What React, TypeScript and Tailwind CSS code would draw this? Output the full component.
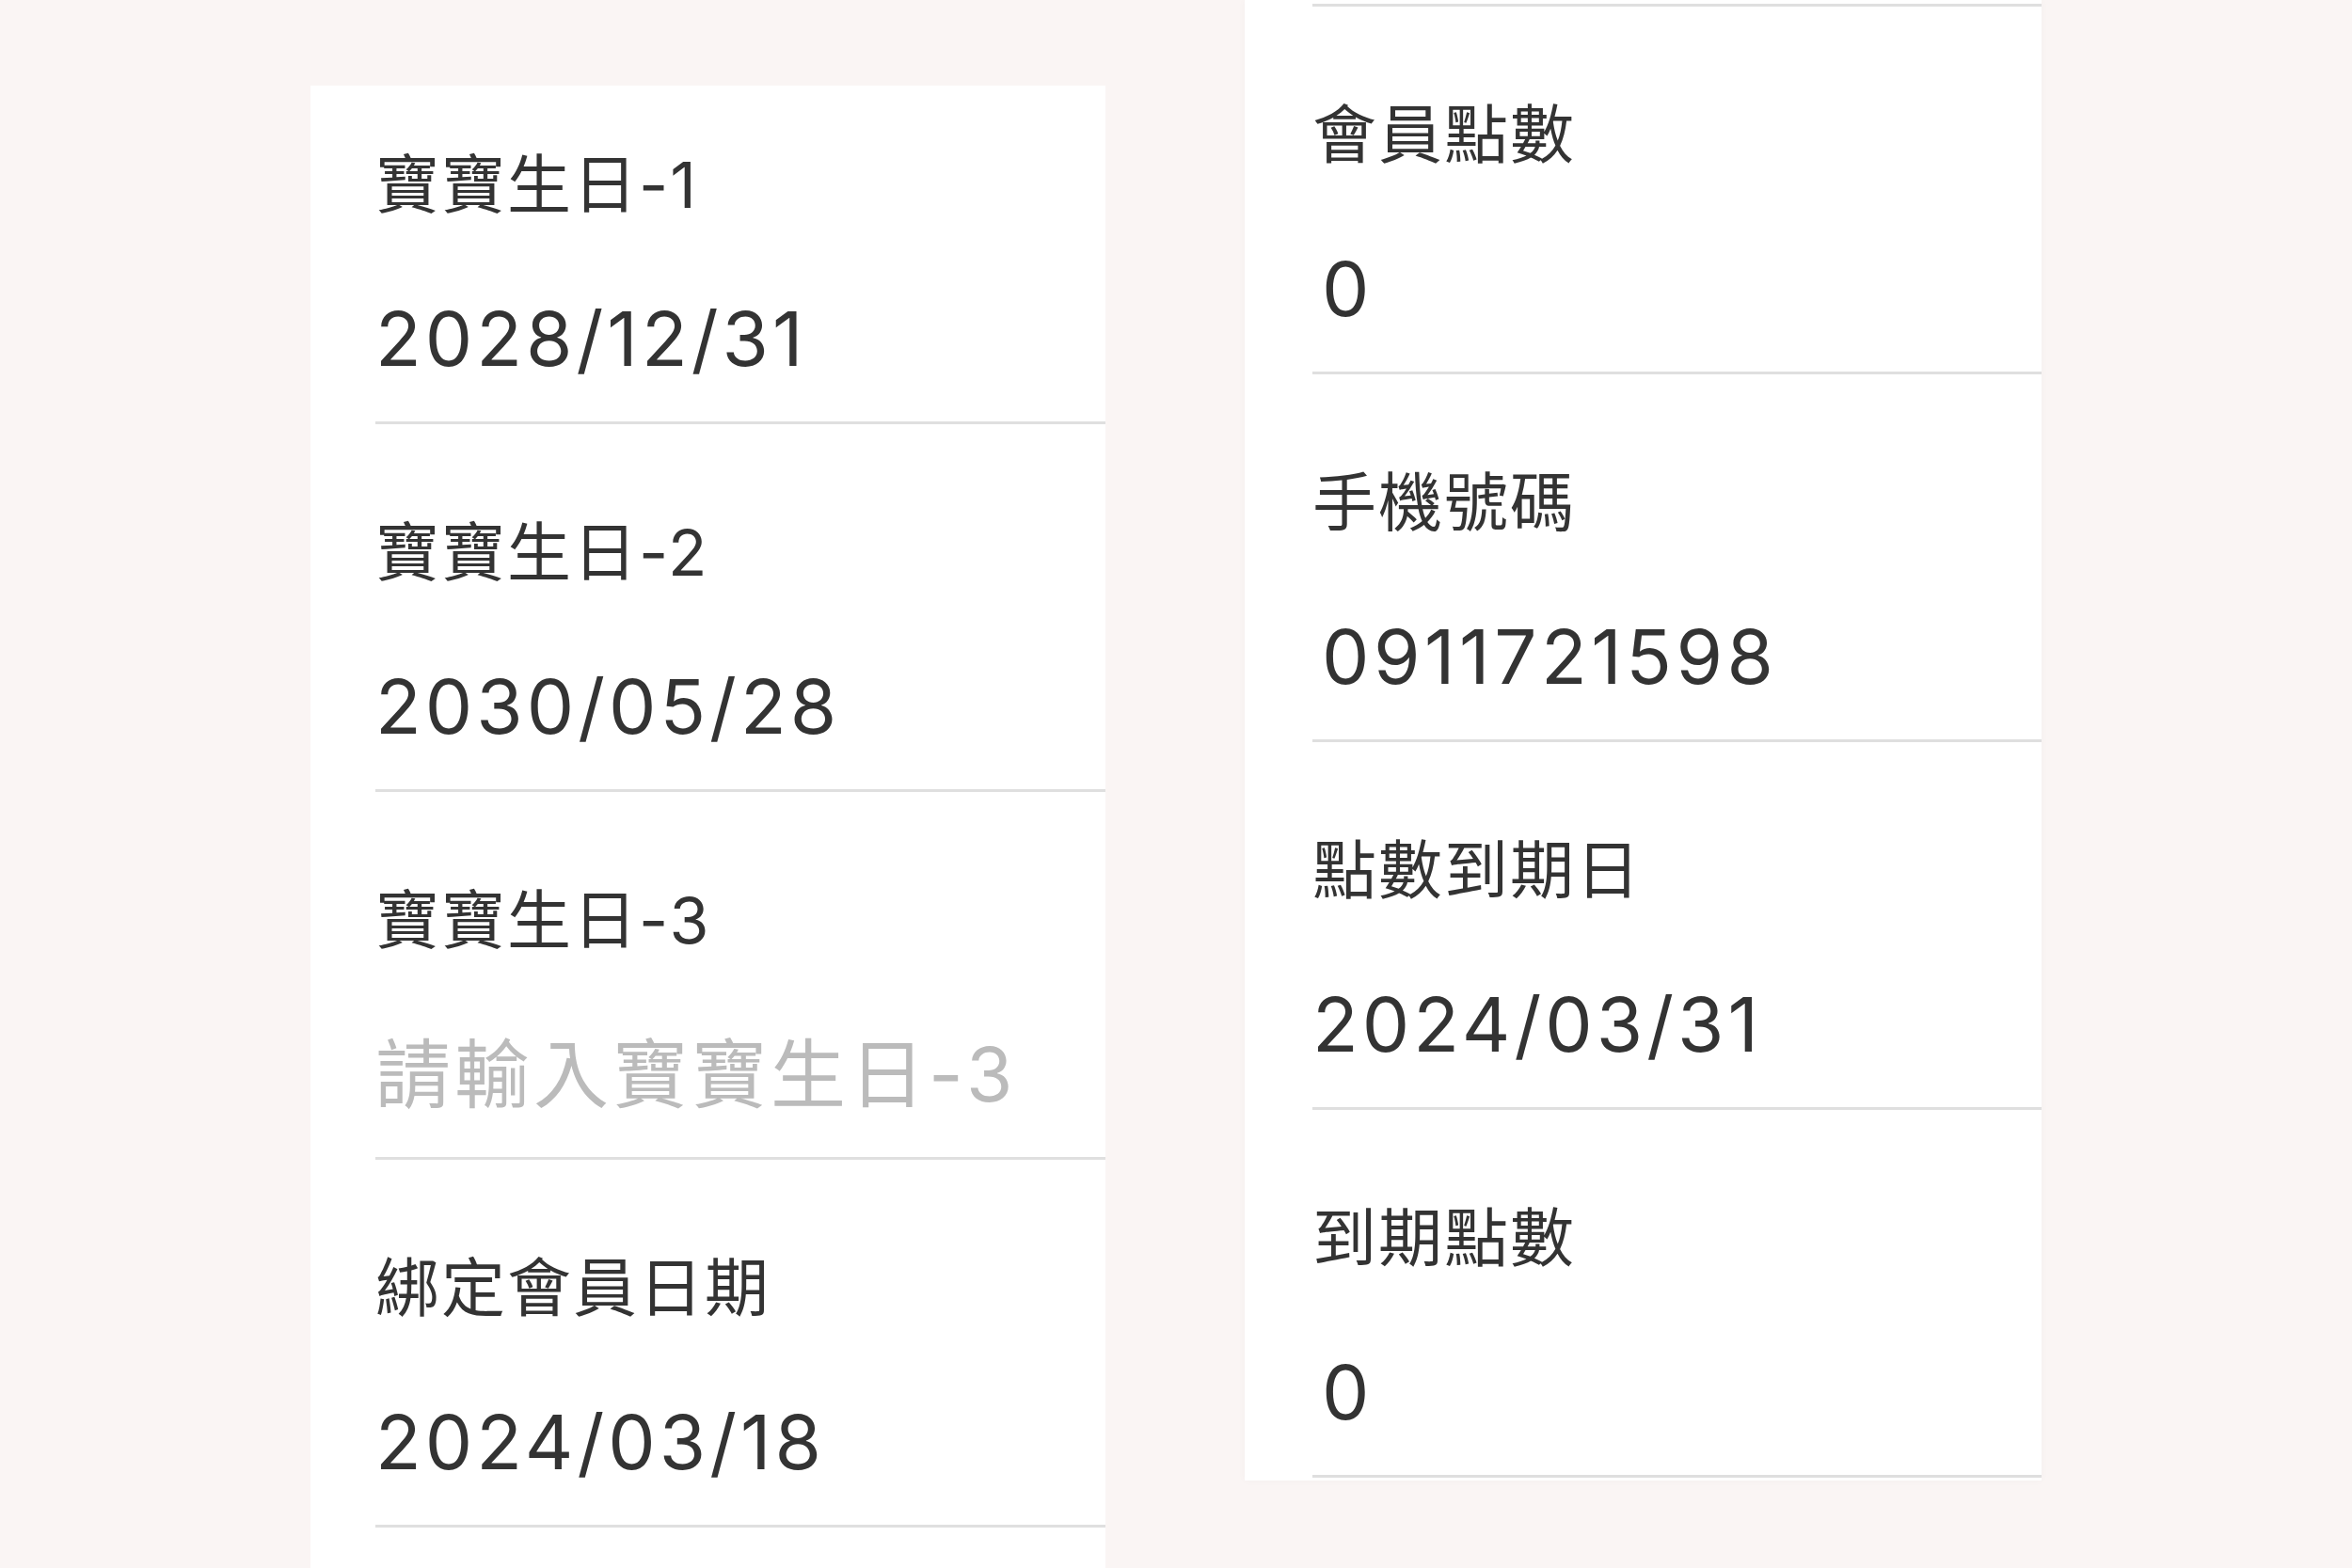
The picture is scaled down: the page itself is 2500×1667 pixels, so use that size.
const leftRows = [
  { label: "寶寶生日-1", value: "2028/12/31" },
  { label: "寶寶生日-2", value: "2030/05/28" },
  { label: "寶寶生日-3", placeholder: "請輸入寶寶生日-3" },
  { label: "綁定會員日期", value: "2024/03/18" },
];

const rightRows = [
  { label: "會員點數", value: "0", inset: true },
  { label: "手機號碼", value: "0911721598", inset: true },
  { label: "點數到期日", value: "2024/03/31" },
  { label: "到期點數", value: "0", inset: true },
];

type RowProps = {
  label: string;
  value?: string;
  placeholder?: string;
  first?: boolean;
  inset?: boolean;
};

const FieldRow = ({ label, value, placeholder, first, inset }: RowProps) => {
  return (
    <div className="border-b-[3px] border-[#dfdfdf] pb-[48px]">
      <div
        className={
          first
            ? "pt-[71px] text-[68px] leading-[68px] tracking-[2px] text-[#333333]"
            : "pt-[102px] text-[68px] leading-[68px] tracking-[2px] text-[#333333]"
        }
      >
        {label}
      </div>
      {value ? (
        <div
          className={
            inset
              ? "mt-[90px] pl-[10px] text-[80px] leading-[80px] tracking-[4.5px] text-[#333333]"
              : "mt-[90px] text-[80px] leading-[80px] tracking-[4px] text-[#333333]"
          }
        >
          {value}
        </div>
      ) : (
        <div className="mt-[90px] text-[80px] leading-[80px] tracking-[4px] text-[#bbbbbb]">
          {placeholder}
        </div>
      )}
    </div>
  );
};

export default function App() {
  return (
    <div className="flex h-screen items-start overflow-hidden bg-[#faf5f4] font-['Inter','Noto_Sans_CJK_TC',sans-serif]">
      <div className="ml-[330px] mt-[91px] w-[845px] bg-white pl-[69px] pb-[200px]">
        {leftRows.map((row, i) => (
          <FieldRow key={row.label} {...row} first={i === 0} />
        ))}
      </div>

      <div className="ml-[148px] w-[847px] bg-white pl-[72px] pb-[3px] shadow-[0_0_8px_rgba(0,0,0,0.03)]">
        <div className="h-[7px] border-b-[3px] border-[#dfdfdf]" />
        {rightRows.map((row) => (
          <FieldRow key={row.label} {...row} />
        ))}
      </div>
    </div>
  );
}
